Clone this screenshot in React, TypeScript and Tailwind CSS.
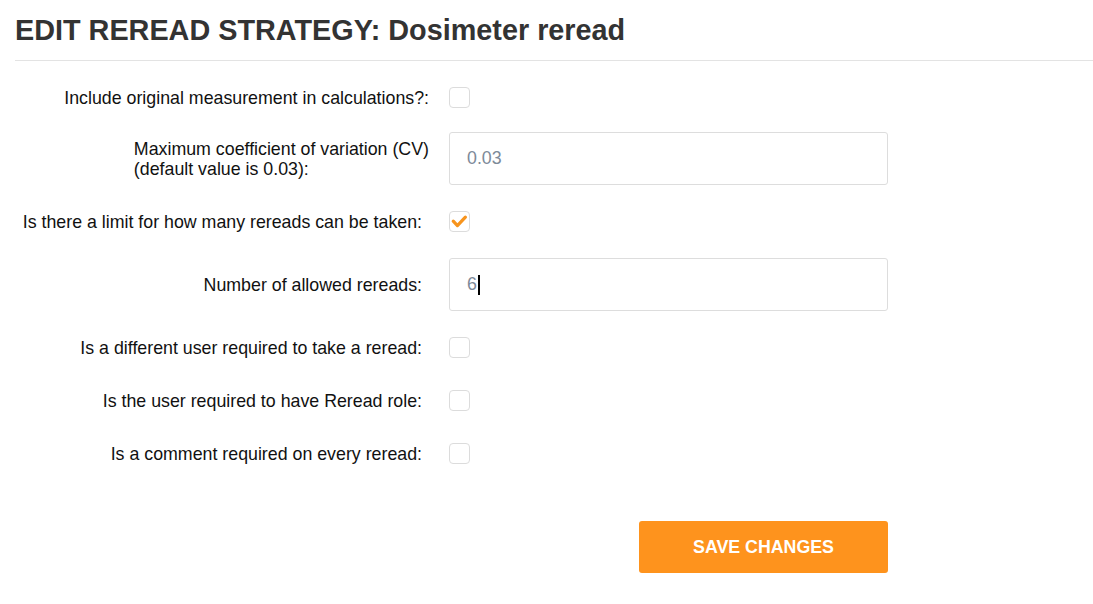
import { useState } from "react";

type Row =
  | { kind: "check"; label: string; checked: boolean; mt: string; pr: string }
  | { kind: "text"; label: string[]; value: string; mt: string; pr: string; caret?: boolean };

const rows: Row[] = [
  { kind: "check", label: "Include original measurement in calculations?:", checked: false, mt: "mt-[26px]", pr: "pr-0" },
  {
    kind: "text",
    label: ["Maximum coefficient of variation (CV)", "(default value is 0.03):"],
    value: "0.03",
    mt: "mt-[24px]",
    pr: "pr-0",
  },
  { kind: "check", label: "Is there a limit for how many rereads can be taken:", checked: true, mt: "mt-[26px]", pr: "pr-[7px]" },
  { kind: "text", label: ["Number of allowed rereads:"], value: "6", mt: "mt-[26px]", pr: "pr-[7px]", caret: true },
  { kind: "check", label: "Is a different user required to take a reread:", checked: false, mt: "mt-[26px]", pr: "pr-[7px]" },
  { kind: "check", label: "Is the user required to have Reread role:", checked: false, mt: "mt-[32px]", pr: "pr-[7px]" },
  { kind: "check", label: "Is a comment required on every reread:", checked: false, mt: "mt-[32px]", pr: "pr-[7px]" },
];

function CheckBox({ checked }: { checked: boolean }) {
  const [on, setOn] = useState(checked);
  return (
    <button
      type="button"
      onClick={() => setOn(!on)}
      className="w-[21px] h-[21px] rounded-[4px] border border-[#dcdcdc] bg-white flex items-center justify-center"
    >
      {on && (
        <svg width="21" height="21" viewBox="0 0 21 21">
          <path d="M3.6 10.2 L8.2 15 L17 5.8" fill="none" stroke="#f7941d" strokeWidth="3.6" strokeLinecap="round" strokeLinejoin="round" />
        </svg>
      )}
    </button>
  );
}

export default function App() {
  return (
    <div className="min-h-screen bg-white pl-[15px] font-['Liberation_Sans',Arial,sans-serif] text-[#111]">
      <h1 className="pt-[14px] text-[28.8px] leading-[33px] font-bold text-[#333]">
        EDIT REREAD STRATEGY: Dosimeter reread
      </h1>
      <div className="mt-[13px] h-px bg-[#e3e3e3]" />

      <form className="flex flex-col" onSubmit={(e) => e.preventDefault()}>
        {rows.map((row, i) => (
          <div key={i} className={`flex items-center ${row.mt}`}>
            <div className={`w-[414px] flex justify-end text-[17.8px] leading-[20px] ${row.pr}`}>
              {row.kind === "check" ? (
                <span className="text-right whitespace-nowrap">{row.label}</span>
              ) : (
                <span className="text-left">
                  {row.label.map((l) => (
                    <span key={l} className="block whitespace-nowrap">
                      {l}
                    </span>
                  ))}
                </span>
              )}
            </div>
            <div className="ml-[20px]">
              {row.kind === "check" ? (
                <CheckBox checked={row.checked} />
              ) : (
                <div className="w-[439px] h-[53px] rounded-[3px] border border-[#dddddd] bg-white flex items-center pl-[17px] text-[17.8px] text-[#7d8a99]">
                  <span>{row.value}</span>
                  {row.caret && <span className="ml-[1px] w-[2px] h-[20px] bg-black" />}
                </div>
              )}
            </div>
          </div>
        ))}

        <div className="mt-[57px] pl-[624px]">
          <button
            type="submit"
            className="w-[249px] h-[52px] rounded-[3px] bg-[#fe931d] text-white text-[17.8px] font-bold uppercase"
          >
            Save Changes
          </button>
        </div>
      </form>
    </div>
  );
}
